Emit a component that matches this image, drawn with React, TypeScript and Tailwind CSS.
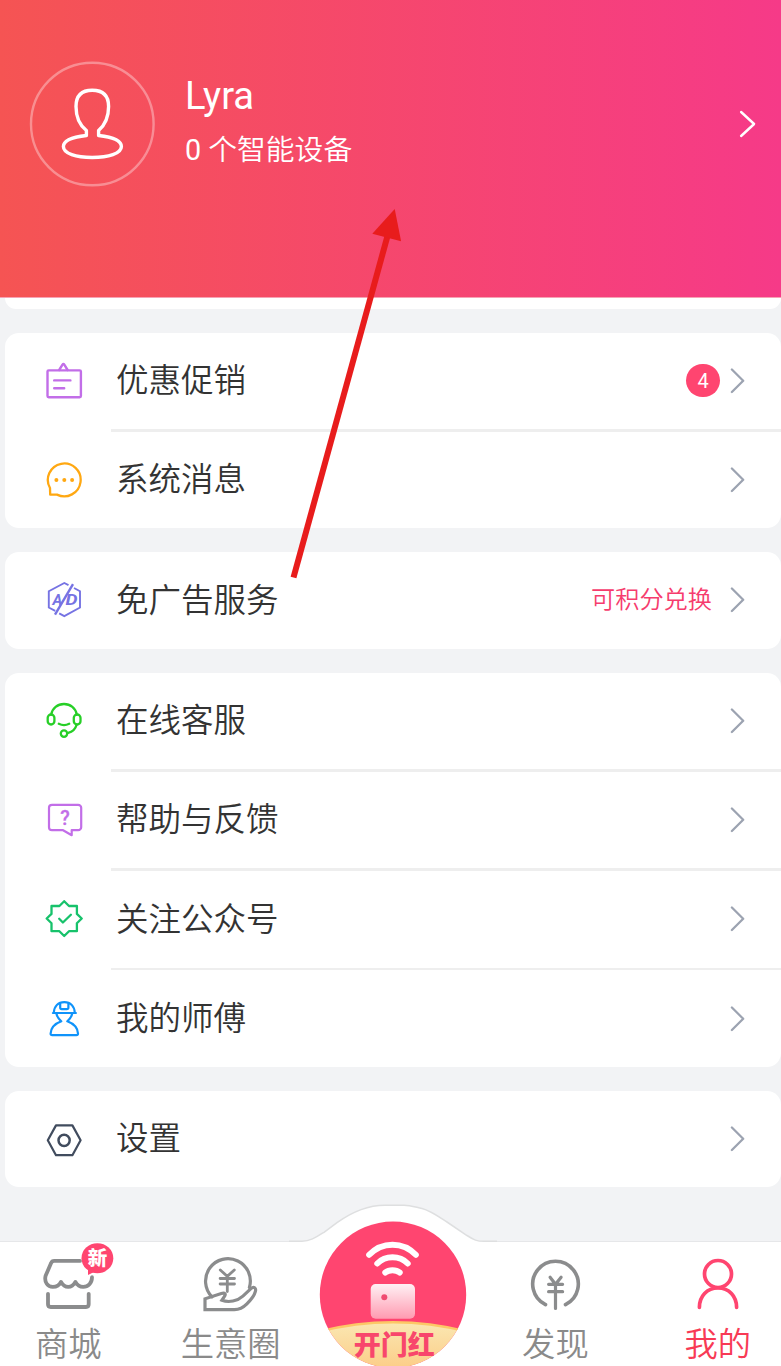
import type { ReactNode } from "react";

const ICON_TEXT = { fontFamily: "Roboto, sans-serif" };

const PromoIcon = () => (
  <svg width="38" height="38" viewBox="0 0 38 38" fill="none" stroke="#c26ee8" strokeWidth="2.4" strokeLinecap="round" strokeLinejoin="round">
    <rect x="2.5" y="8.4" width="33.4" height="26.8" rx="1.2" />
    <path d="M14.2 8l3.3-5.3q.9-1.4 1.8 0L22.6 8M9.2 18.4h16.2M9.2 26.2h10" />
  </svg>
);

const MessageIcon = () => (
  <svg width="38" height="38" viewBox="0 0 38 38" fill="none" stroke="#ffa812" strokeWidth="2.3" strokeLinejoin="round">
    <path d="M5 27A16.4 16.4 0 1 1 12 33.6H5.2Z" />
    <g fill="#ffa812" stroke="none">
      <circle cx="11.4" cy="19" r="2" />
      <circle cx="19.3" cy="19" r="2" />
      <circle cx="27.1" cy="19" r="2" />
    </g>
  </svg>
);

const NoAdIcon = () => (
  <svg width="38" height="38" viewBox="0 0 38 38" fill="none" stroke="#7673e3" strokeWidth="1.9">
    <path d="M23.5 4.2L19.3 2 3.8 10.2v16.3l6.400 3.400M14.200 32.300l5.100 2.800L35 26.500V10.200l-6-3.200" />
    <g fill="#7673e3" stroke="none" fontSize="15" fontWeight="700" fontStyle="italic" style={ICON_TEXT}>
      <text x="7.400" y="23.800">A</text>
      <text x="20.600" y="23.800" textLength="12" lengthAdjust="spacingAndGlyphs">D</text>
    </g>
    <path d="M28 3.200L10 33.600" strokeWidth="2.400" />
  </svg>
);

const ServiceIcon = () => (
  <svg width="38" height="38" viewBox="0 0 38 38" fill="none" stroke="#27cf27" strokeWidth="2.3" strokeLinecap="round">
    <path d="M6.2 12.5C7.3 6 12.6 2 19 2s11.7 4 12.8 10.5" />
    <rect x="2.7" y="12.5" width="6.7" height="10" rx="3.3" />
    <rect x="28.8" y="12.5" width="6.7" height="10" rx="3.3" />
    <path d="M13.8 21.8q5.2 2.7 10.4 0M31.5 23c-1 4-4.2 6.8-8.4 7.800" />
    <circle cx="19" cy="31.6" r="3.2" />
  </svg>
);

const HelpIcon = () => (
  <svg width="38" height="38" viewBox="0 0 38 38" fill="none" stroke="#c26ee8" strokeWidth="2.2" strokeLinejoin="round">
    <path d="M7 3.800h26.200a3 3 0 0 1 3 3v19.400a3 3 0 0 1-3 3h-6.500v5l-8.600-5H7a3 3 0 0 1-3-3V6.800a3 3 0 0 1 3-3Z" />
    <text x="20.100" y="24" textAnchor="middle" fontSize="19.500" fontWeight="500" fill="#c26ee8" stroke="#c26ee8" strokeWidth=".3" style={ICON_TEXT}>?</text>
  </svg>
);

const FollowIcon = () => (
  <svg width="38" height="38" viewBox="0 0 38 38" fill="none" stroke="#17c26b" strokeWidth="2.3" strokeLinejoin="round" strokeLinecap="round">
    <path d="M19.2 1.2L24 6h7.9v7.9l4.8 4.6-4.8 4.8v7.9H24L19.2 36l-4.8-4.8H6.5v-7.9l-4.8-4.8 4.8-4.6V6h7.9Z" />
    <path d="M14.2 18.8l3.7 3.7 8-7.8" />
  </svg>
);

const MasterIcon = () => (
  <svg width="38" height="38" viewBox="0 0 38 38" fill="none" stroke="#0f93fa" strokeWidth="2.2" strokeLinecap="round" strokeLinejoin="round">
    <path d="M8.8 12.8C9.2 6 13.2 2.2 19.3 2.2S29.4 6 29.8 12.8M7.9 13h23" />
    <path d="M15.2 3v4.5q0 1.6 1.6 1.6h5q1.6 0 1.6-1.6V3" />
    <path d="M11.3 13.3c.8 3.7 2.6 6 5 8-6 2.2-10.3 6-10.7 12.2q0 1.7 1.6 1.7h24.2q1.6 0 1.600-1.700c-.4-6.200-4.700-10-10.700-12.200 2.400-2 4.200-4.300 5-8" />
  </svg>
);

const SettingsIcon = () => (
  <svg width="38" height="38" viewBox="0 0 38 38" fill="none" stroke="#414c5e" strokeWidth="2.2" strokeLinejoin="round">
    <path d="M2.8 20.3L11 5.4h16.4l8.2 14.9-8.2 14.9H11Z" />
    <circle cx="19.1" cy="20.3" r="5.6" strokeWidth="2.5" />
  </svg>
);

const ShopIcon = () => (
  <svg width="92" height="72" viewBox="-10 0 92 72" fill="none" stroke="#8b8c8d" strokeWidth="3.8" strokeLinecap="round" strokeLinejoin="round">
    <path d="M48 18.9H22.3q-2.4 0-3.2 2.2L13.6 33.8c-1.6 6.3 2.2 11.1 7.2 11.1 4 0 6.8-2 8.2-5 1.6 3 4 5 7.2 5s5.6-2 7.2-5c1.6 3 4.2 5 7.8 5 5 0 8.8-4 8.8-9.7" />
    <path d="M16 51.8v10.5q0 2.7 2.7 2.7H54q2.7 0 2.7-2.7V51.8" />
    <path d="M56 22v11.5l8-4Z" fill="#ff4570" stroke="#fff" strokeWidth="2" />
    <ellipse cx="65.4" cy="16.2" rx="15.9" ry="15" fill="#ff4570" stroke="none" />
    <path d="M56 22v11l8-4Z" fill="#ff4570" stroke="none" />
    <text x="65.6" y="23" textAnchor="middle" fontSize="19.5" fontWeight="900" fill="#fff" stroke="none" style={{ fontFamily: '"Noto Sans CJK SC", sans-serif' }}>新</text>
  </svg>
);

const BusinessIcon = () => (
  <svg width="72" height="72" viewBox="0 0 72 72" fill="none" stroke="#8b8c8d" strokeWidth="3.2" strokeLinecap="round">
    <path d="M17 54.8A22.4 22.4 0 1 1 54.4 45.5" />
    <path d="M25.3 28l7 6.4 7-6.4M32.3 34.5v15M25.1 36.5h14.4M25.1 42h14.4" strokeWidth="2.8" />
    <path d="M10 67.6V56.8l16.3-5.3c4-1 4.800.6 3 3.200l-2.400 3.600c7 2.600 15.500.8 21-4.200l8-7.500c3-2.600 5.400-.6 4.500 2.800-1.200 5-5 9-8.500 12.500-4 4-7.500 5.700-12.500 5.700Z" />
  </svg>
);

const DiscoverIcon = () => (
  <svg width="72" height="72" viewBox="0 0 72 72" fill="none" stroke="#8b8c8d" strokeWidth="3.6" strokeLinecap="round">
    <path d="M26.5 62.6A22.8 22.8 0 1 1 46.5 62.6" />
    <path d="M31.1 35.3l5.4 7 5.6-7M36.5 42.5v24M29.6 42.3h14M29.6 49.7h14" strokeWidth="3.2" />
  </svg>
);

const MineIcon = () => (
  <svg width="72" height="72" viewBox="0 0 72 72" fill="none" stroke="#ff4570" strokeWidth="3.7" strokeLinecap="round">
    <circle cx="36" cy="32" r="13.5" />
    <path d="M17.4 65.3C17.400 54 25 46 36 46S54.600 54 54.600 65.300" />
  </svg>
);

const DeviceButton = () => (
  <svg width="148" height="145" viewBox="0 0 148 145" fill="none">
    <defs>
      <linearGradient id="device" x1="0" y1="0" x2="0" y2="1">
        <stop stopColor="#fff0f4" />
        <stop offset="1" stopColor="#ff9bb1" />
      </linearGradient>
      <linearGradient id="gold" x1="0" y1="0" x2="0" y2="1">
        <stop stopColor="#fae7b2" />
        <stop offset="1" stopColor="#fccd87" />
      </linearGradient>
      <clipPath id="disc">
        <circle cx="74" cy="73.7" r="73.2" />
      </clipPath>
    </defs>
    <g clipPath="url(#disc)">
      <path d="M0 0h148v148H0Z" fill="#ff4570" />
      <path d="M-2 111Q74 91.500 150 111V148H-2Z" fill="url(#gold)" />
      <path d="M-2 111Q74 91.500 150 111" stroke="#fdc765" strokeWidth="2.600" />
    </g>
    <g stroke="#fff" strokeWidth="6" strokeLinecap="round">
      <path d="M50.2 33.800C63 20.300 84 20.300 96.800 33.800" />
      <path d="M58.300 42.500C66.500 34.300 80.500 34.300 88.700 42.500" />
      <path d="M66.300 51.600C70 48.300 77 48.300 80.700 51.600" />
    </g>
    <rect x="51.700" y="63" width="44.300" height="34.700" rx="5" fill="url(#device)" />
    <circle cx="65.300" cy="76.200" r="3" fill="#f04a70" />
    <text x="75.300" y="134" textAnchor="middle" fontSize="27" fontWeight="900" fill="#f8466c" style={{ fontFamily: '"Noto Sans CJK SC", sans-serif' }}>开门红</text>
  </svg>
);

const Chevron = () => (
  <svg width="16" height="26" viewBox="0 0 16 26" fill="none" stroke="#9ca3b1" strokeWidth="2.3" strokeLinecap="round" strokeLinejoin="round">
    <path d="M1.9 1.5l11.3 11.2L1.9 24" />
  </svg>
);

const groups: { icon: () => ReactNode; label: string; badge?: number; hint?: string }[][] = [
  [
    { icon: PromoIcon, label: "优惠促销", badge: 4 },
    { icon: MessageIcon, label: "系统消息" },
  ],
  [{ icon: NoAdIcon, label: "免广告服务", hint: "可积分兑换" }],
  [
    { icon: ServiceIcon, label: "在线客服" },
    { icon: HelpIcon, label: "帮助与反馈" },
    { icon: FollowIcon, label: "关注公众号" },
    { icon: MasterIcon, label: "我的师傅" },
  ],
  [{ icon: SettingsIcon, label: "设置" }],
];

function Header() {
  return (
    <header className="flex h-[298px] shrink-0 items-start border-b border-[#f6a3b4] bg-linear-to-r/srgb from-[#f55453] to-[#f63a88] pl-[29px] pt-[61px] text-white">
      <svg width="126" height="126" viewBox="0 0 126 126" fill="none" stroke="#fff">
        <circle cx="63.3" cy="63" r="61.3" strokeOpacity=".35" strokeWidth="2.4" />
        <path
          d="M57.400 74.500V69.500C50.400 64 47 55 47 45.500c0-11 5.400-16.200 16.200-16.200S79.600 34.500 79.600 45.500C79.600 55 76 64 69.600 69.500v5C82.400 76 92.400 79.500 92.400 85.500c0 7-13 11-29.200 11S34.400 92.500 34.400 85.500c0-6 10-9.500 23-11Z"
          strokeWidth="3.4"
          strokeLinejoin="round"
        />
      </svg>
      <div className="ml-[30px] mt-[12px]">
        <h1 className="text-[38.2px] leading-[46px]">Lyra</h1>
        <p className="mt-[10px] text-[28.8px] leading-[42px] [font-weight:350]">
          <span className="font-normal">0</span> 个智能设备
        </p>
      </div>
      <svg className="ml-auto mr-[24px] mt-[49px]" width="18" height="28" viewBox="0 0 18 28" fill="none" stroke="#fff" strokeWidth="2.4" strokeLinecap="round" strokeLinejoin="round">
        <path d="M2.1 2l13 12-13 12" />
      </svg>
    </header>
  );
}

function MenuCards() {
  return (
    <main className="flex flex-1 flex-col gap-[24.1px] pl-[5px]">
      <div className="h-[10.5px] shrink-0 rounded-b-xl bg-white" />
      {groups.map((rows) => (
        <section key={rows[0].label} className="shrink-0 overflow-hidden rounded-[14px] bg-white">
          {rows.map(({ icon: Icon, label, badge, hint }, i) => (
            <div key={label}>
              {i > 0 && <div className="ml-[106px] h-[2.8px] bg-[#eee]" />}
              <div className="flex h-[96.4px] items-center pl-10 pr-[35px] text-[#333]">
                <Icon />
                <span className="ml-[33px] mt-[1px] text-[32.5px] leading-none [font-weight:350]">{label}</span>
                <span className="ml-auto flex items-center">
                  {badge && (
                    <span className="mr-[10px] flex h-[33px] w-[34px] items-center justify-center rounded-full bg-[#ff4570] text-xl text-white">
                      {badge}
                    </span>
                  )}
                  {hint && <span className="mr-[18px] text-[24.2px] leading-none text-[#f63c6d] [font-weight:350]">{hint}</span>}
                  <Chevron />
                </span>
              </div>
            </div>
          ))}
        </section>
      ))}
    </main>
  );
}

const tabs = [
  { icon: ShopIcon, label: "商城" },
  { icon: BusinessIcon, label: "生意圈" },
  null,
  { icon: DiscoverIcon, label: "发现" },
  { icon: MineIcon, label: "我的", active: true },
];

function TabBar() {
  return (
    <nav className="relative h-[125px] shrink-0 border-t border-[#e6e7e9] bg-white">
      {/* raised hump behind the centre button */}
      <svg className="absolute left-[289px] top-[-38px]" width="208" height="40" viewBox="0 0 208 40">
        <path
          d="M0 37.3h13c8 0 14-4 22-9L48 18.7C60 10 76 1.2 96 1.2h19c6 .2 11 1.8 18 3.3 8 2 15 7 25 13.5l20 13.5c7 4.5 10 5.8 17 5.8h13V40H0Z"
          fill="#fff"
        />
        <path
          d="M0 37.3h13c8 0 14-4 22-9L48 18.7C60 10 76 1.2 96 1.2h19c6 .2 11 1.8 18 3.3 8 2 15 7 25 13.5l20 13.5c7 4.5 10 5.8 17 5.8h13"
          fill="none"
          stroke="#dedfe0"
          strokeWidth="1.5"
        />
      </svg>
      <div className="-ml-[13px] grid w-[812px] grid-cols-5 justify-items-center">
        {tabs.map((tab) =>
          tab ? (
            <a key={tab.label} className="flex flex-col items-center">
              <tab.icon />
              <span className={`mt-[14px] text-[33.3px] leading-[34px] [font-weight:350] ${tab.active ? "text-[#f83a55]" : "text-[#8a8a8a]"}`}>
                {tab.label}
              </span>
            </a>
          ) : (
            <a key="device" className="relative -mt-[21px]">
              <DeviceButton />
            </a>
          )
        )}
      </div>
    </nav>
  );
}

export default function App() {
  return (
    <div className="relative flex h-[1366px] w-[781px] flex-col overflow-hidden bg-[#f2f3f5] font-[Roboto,'Noto_Sans_CJK_SC',sans-serif]">
      <Header />
      <MenuCards />
      <TabBar />
      <svg className="pointer-events-none absolute left-[288px] top-[205px]" width="116" height="376" viewBox="288 205 116 376">
        <path d="M293.5 577.5L387.5 236" stroke="#e81c1c" strokeWidth="6" />
        <path d="M394.7 209l-22.4 24.8 28.8 7.5Z" fill="#e81c1c" />
      </svg>
    </div>
  );
}
